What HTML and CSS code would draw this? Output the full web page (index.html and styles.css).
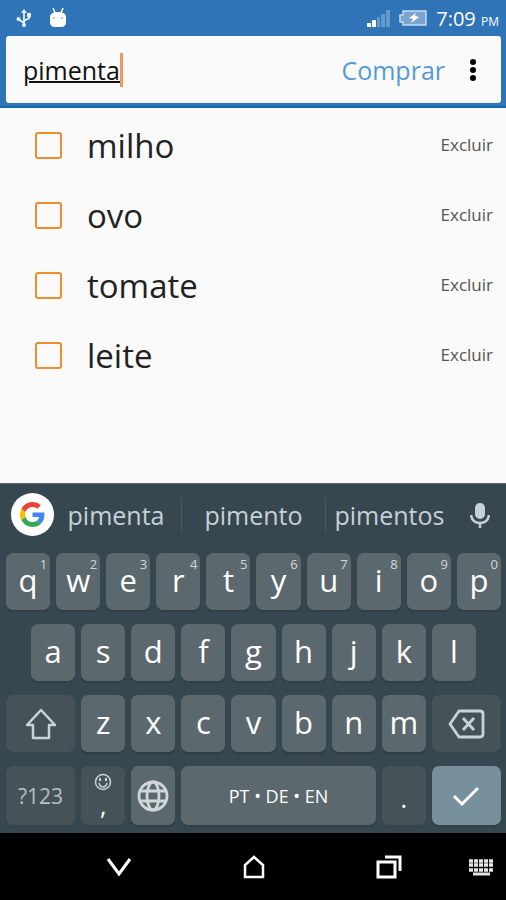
FILE: index.html
```
<!DOCTYPE html>
<html lang="pt">
<head>
<meta charset="utf-8">
<meta name="viewport" content="width=device-width, initial-scale=1">
<title>Lista de compras</title>
<link rel="stylesheet" href="styles.css">
</head>
<body>
<header class="top">
  <div class="status">
    <svg class="usb" width="16" height="20" viewBox="0 0 16 20" fill="none" stroke="#e4f3ff" stroke-width="1.800"><path d="M8 3v14M2 10v1l6 4M14 8l-1 2-5 3"/><path d="M5 5l3-4 3 4z" fill="#e4f3ff" stroke="none"/><circle cx="8" cy="17" r="2" fill="#e4f3ff" stroke="none"/><circle cx="2.500" cy="11" r="2" fill="#e4f3ff" stroke="none"/><path d="M11 5h4v4h-4z" fill="#e4f3ff" stroke="none"/></svg>
    <svg class="droid" width="20" height="20" viewBox="0 0 20 20"><path d="M5 0l2 5M15 0l-2 5" stroke="#fff" stroke-width="1.500"/><path d="M2 9q0-5 8-5t8 5v5q0 5-5 5H7q-5 0-5-5z" fill="#fff"/><circle cx="6" cy="10" r="1" fill="#8fb5d8"/><circle cx="14" cy="10" r="1" fill="#8fb5d8"/></svg>
    <span class="grow"></span>
    <svg width="23" height="18" viewBox="0 0 23 18"><path d="M0 14h4v4H0zM5 11h4v7H5z" fill="#fff"/><path d="M10 8h3v10h-3zM14 5h4v13h-4zM19 1h4v17h-4z" fill="#6499cc"/></svg>
    <svg class="battery" width="28" height="18" viewBox="0 0 28 18"><path d="M4 2h23v14H4v-3H1V6h3z" fill="#79a5d0" stroke="#c5dcf1" stroke-width="1.500"/><path d="M17 4l-7 5 4 1-2 4 8-6-4-1z" fill="#fff"/></svg>
    <span class="clock">7:09 <small>PM</small></span>
  </div>
  <form class="card">
    <div class="field">
      <input class="entry" type="text" aria-label="Item" value="pimenta" size="7" spellcheck="false">
      <span class="caret"></span>
    </div>
    <button class="buy" type="button">Comprar</button>
    <button class="more" type="button" aria-label="Menu"><svg width="8" height="24" viewBox="0 0 8 24"><circle cx="4" cy="4" r="3"/><circle cx="4" cy="12" r="3"/><circle cx="4" cy="20" r="3"/></svg></button>
  </form>
</header>
<main class="main">
  <ul class="list">
    <li class="row"><input class="tick" type="checkbox" id="i1"><label for="i1">milho</label><button class="del" type="button">Excluir</button></li>
    <li class="row"><input class="tick" type="checkbox" id="i2"><label for="i2">ovo</label><button class="del" type="button">Excluir</button></li>
    <li class="row"><input class="tick" type="checkbox" id="i3"><label for="i3">tomate</label><button class="del" type="button">Excluir</button></li>
    <li class="row"><input class="tick" type="checkbox" id="i4"><label for="i4">leite</label><button class="del" type="button">Excluir</button></li>
  </ul>
</main>
<section class="keyboard">
  <div class="suggest">
    <button class="google" type="button" aria-label="Google"><svg width="25" height="25" viewBox="0 0 48 48"><path fill="#ea4335" d="M24 9.500c3.540 0 6.710 1.220 9.210 3.600l6.850-6.850C35.900 2.380 30.470 0 24 0 14.620 0 6.510 5.380 2.560 13.220l7.980 6.190C12.430 13.720 17.740 9.500 24 9.500z"/><path fill="#4285f4" d="M46.980 24.550c0-1.570-.15-3.090-.38-4.550H24v9.020h12.940c-.58 2.960-2.260 5.480-4.780 7.180l7.730 6c4.510-4.180 7.090-10.360 7.090-17.650z"/><path fill="#fbbc05" d="M10.530 28.590c-.48-1.450-.76-2.990-.76-4.590s.27-3.140.76-4.590l-7.980-6.190C.92 16.460 0 20.120 0 24s.92 7.540 2.560 10.780z"/><path fill="#34a853" d="M24 48c6.480 0 11.930-2.130 15.890-5.810l-7.730-6c-2.150 1.450-4.920 2.300-8.160 2.300-6.260 0-11.570-4.220-13.470-9.910l-7.980 6.190C6.510 42.620 14.620 48 24 48z"/></svg></button>
    <button class="word" type="button">pimenta</button>
    <button class="word" type="button">pimento</button>
    <button class="word" type="button">pimentos</button>
    <button class="mic" type="button" aria-label="Voz"><svg width="20" height="26" viewBox="0 0 20 26"><rect x="5" y="1" width="10" height="16" rx="5" fill="#c6d0d7"/><path d="M1 13q1 8 9 8t9-8M10 20v6" fill="none" stroke="#c6d0d7" stroke-width="2.500"/></svg></button>
  </div>
  <div class="keys">
    <button class="key">q<span class="hint">1</span></button><button class="key">w<span class="hint">2</span></button><button class="key">e<span class="hint">3</span></button><button class="key">r<span class="hint">4</span></button><button class="key">t<span class="hint">5</span></button><button class="key">y<span class="hint">6</span></button><button class="key">u<span class="hint">7</span></button><button class="key">i<span class="hint">8</span></button><button class="key">o<span class="hint">9</span></button><button class="key">p<span class="hint">0</span></button>
    <button class="key inset">a</button><button class="key">s</button><button class="key">d</button><button class="key">f</button><button class="key">g</button><button class="key">h</button><button class="key">j</button><button class="key">k</button><button class="key">l</button>
    <button class="key wide dim first" aria-label="Shift"><svg width="34" height="32" viewBox="0 0 34 32"><path d="M17 2L31 17H25V30H9V17H3z" fill="none" stroke="#ccd3d7" stroke-width="2.500" stroke-linejoin="round"/></svg></button><button class="key">z</button><button class="key">x</button><button class="key">c</button><button class="key">v</button><button class="key">b</button><button class="key">n</button><button class="key">m</button><button class="key wide dim" aria-label="Apagar"><svg width="38" height="30" viewBox="0 0 38 30" fill="none" stroke="#ccd3d7" stroke-width="2.800" stroke-linejoin="round"><path d="M12 2h21q3 0 3 3v20q0 3-3 3H12L3 15z"/><path d="M16 9l11 12M27 9L16 21"/></svg></button>
    <button class="key wide dim mode">?123</button>
    <button class="key dim comma"><svg width="18" height="18" viewBox="0 0 18 18" fill="none" stroke="#ccd3d7" stroke-width="1.500"><circle cx="9" cy="9" r="7.500"/><path d="M5 10q1 4 4 4t4-4"/><path d="M6 5v3M12 5v3" stroke-width="2"/></svg><span>,</span></button>
    <button class="key" aria-label="Idioma"><svg width="32" height="32" viewBox="0 0 32 32" fill="none" stroke="#d0d6da" stroke-width="2.800"><circle cx="16" cy="16" r="14"/><ellipse cx="16" cy="16" rx="6" ry="14"/><path d="M3 11h26M3 21h26"/></svg></button>
    <button class="key space">PT • DE • EN</button>
    <button class="key dim dot">.</button>
    <button class="key wide enter" aria-label="Concluir"><svg width="28" height="22" viewBox="0 0 28 22"><path d="M2 11l8 8L26 3" fill="none" stroke="#fff" stroke-width="3"/></svg></button>
  </div>
</section>
<nav class="nav">
  <button aria-label="Voltar"><svg width="26" height="22" viewBox="0 0 26 22"><path d="M2 3l11 15L24 3" fill="none" stroke="#fff" stroke-width="3"/></svg></button>
  <button aria-label="Início"><svg width="24" height="24" viewBox="0 0 24 24"><path d="M3 22V10l9-8 9 8v12z" fill="none" stroke="#fff" stroke-width="2.500"/></svg></button>
  <button aria-label="Recentes"><svg width="26" height="24" viewBox="0 0 26 24"><path d="M2 7h17v15H2zM9 2h15v14" fill="none" stroke="#fff" stroke-width="3"/></svg></button>
  <button class="ime" aria-label="Teclado"><svg width="26" height="18" viewBox="0 0 26 18" fill="none" stroke="#e6e6e6"><path d="M1 3h25M1 7h25M1 12h25" stroke-width="3.500" stroke-dasharray="4 1"/><path d="M5 16h17" stroke-width="3"/></svg></button>
</nav>
</body>
</html>
```
FILE: styles.css
```
* { box-sizing: border-box; }
body {
  margin: 0;
  min-height: 100vh;
  display: flex;
  flex-direction: column;
  background: #fafafa;
  color: #222;
  font-family: "Open Sans", "Noto Sans", sans-serif;
}
button, input {
  margin: 0;
  padding: 0;
  border: 0;
  background: none;
  color: inherit;
  font: inherit;
}
svg { display: block; flex: none; }

.top { background: #2f74b6; padding: 0 5px 3px 6px; border-bottom: 2px solid #146cab; }
.status { height: 36px; display: flex; align-items: center; padding: 0 2px 0 10px; }
.droid { margin-left: 16px; }
.grow { flex: 1; }
.battery { margin: 0 9px; }
.clock { color: #fff; font-size: 20px; white-space: nowrap; }
.clock small { font-size: 12px; }
.card {
  height: 67px;
  display: flex;
  align-items: center;
  padding: 0 16px 0 17px;
  background: #fafafa;
  border-radius: 3px;
}
.field { flex: 1; display: flex; align-items: center; }
.entry {
  field-sizing: content;
  font-size: 25px;
  color: #111;
  text-decoration: underline;
  text-decoration-thickness: 2px;
  outline: none;
}
.caret { width: 3px; height: 34px; background: #f2965a; }
.buy { font-size: 25px; color: #559bd7; }
.more { padding: 0 8px; margin-left: 16px; }

.main { flex: 1; }
.list { list-style: none; margin: 0; padding: 2px 13px 0 35px; }
.row { height: 70px; display: flex; align-items: center; }
.row label { flex: 1; padding-left: 25px; font-size: 33px; }
.tick {
  appearance: none;
  width: 27px;
  height: 27px;
  border: 2px solid #f08c2c;
  border-radius: 3px;
}
.tick:checked { background: #f08c2c; }
.del { font-size: 17px; line-height: 20px; color: #555; }

.keyboard { background: #37474f; border-top: 1px solid #5c686e; }
.suggest {
  height: 61px;
  display: grid;
  grid-template-columns: 51px 130fr 144fr 128fr 53px;
  align-items: center;
}
.google {
  width: 43px;
  height: 43px;
  margin-left: 11px;
  display: grid;
  place-items: center;
  border-radius: 50%;
  background: #fff;
}
.word { height: 34px; font-size: 25px; line-height: 32px; color: #c6d0d7; }
.word + .word { border-left: 1px solid #4b5a62; }
.mic { justify-self: center; }
.keys {
  display: grid;
  grid-template-columns: repeat(20, minmax(0, 1fr));
  grid-template-rows: 57px 57px 57px 59px;
  gap: 14px 6px;
  padding: 8px 5px 8px 6px;
}
.key {
  grid-column: span 2;
  position: relative;
  display: flex;
  align-items: center;
  justify-content: center;
  border-radius: 7px;
  background: #5b686e;
  box-shadow: 0 2px 1px #303e45;
  color: #fff;
  font-size: 31px;
  line-height: 40px;
  padding-bottom: 4px;
}
.key:has(svg) { padding-bottom: 0; }
.inset { grid-column: 2 / span 2; }
.wide { grid-column: span 3; }
.first { grid-column: 1 / span 3; }
.dim { background: #455359; box-shadow: 0 1px 1px #36444b; }
.hint { position: absolute; top: 1px; right: 3px; font-size: 13px; line-height: 20px; color: #d3d8db; }
.mode { font-size: 21px; color: #b8c0c4; padding: 0; }
.comma { flex-direction: column; font-size: 25px; line-height: 28px; }
.space { grid-column: span 8; font-size: 18px; padding: 0; }
.dot { font-size: 25px; padding: 4px 0 0; }
.enter { background: #78909c; }

.nav {
  height: 67px;
  display: grid;
  grid-template-columns: 51px 135fr 135fr 135fr 50px;
  align-items: center;
  background: #000;
}
.nav button { justify-self: center; }
.nav button:first-child { grid-column: 2; }
```
